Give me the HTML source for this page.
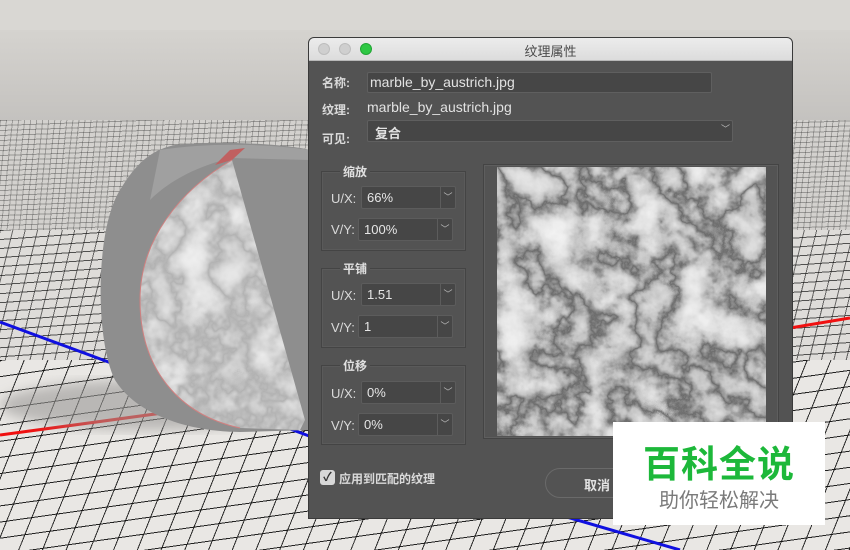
<!DOCTYPE html>
<html><head><meta charset="utf-8">
<style>
*{margin:0;padding:0;box-sizing:border-box}
body{width:850px;height:550px;overflow:hidden;position:relative;background:#e8e6e3;font-family:"Liberation Sans","Noto Sans CJK SC",sans-serif}
.band{position:absolute;left:0;width:850px}
.dlg{position:absolute;left:308px;top:37px;width:485px;height:482px;background:#535353;border-radius:6px 6px 0 0;overflow:hidden;border:1px solid #3a3a3a}
.tb{position:absolute;left:0;top:0;width:100%;height:23px;background:linear-gradient(#ececec,#dcdcdc);border-bottom:1px solid #b8b8b8}
.tl{position:absolute;top:5px;width:12px;height:12px;border-radius:50%;background:#cfcfcf;border:1px solid #bdbdbd}
.t{position:absolute;color:#e2e2e2;font-size:13px;white-space:nowrap}
.lab{position:absolute;color:#dadada;font-size:12px;white-space:nowrap;font-weight:bold}
.inp{position:absolute;background:#464646;border:1px solid #5f5f5f;border-radius:2px}
.grp{position:absolute;border:1px solid #444;box-shadow:inset 0 0 0 1px #5a5a5a;left:12px;width:145px;height:80px}
.gl{position:absolute;left:18px;top:-9px;background:#535353;padding:0 3px;color:#e0e0e0;font-size:12px;font-weight:bold}
.fld{position:absolute;height:23px;background:#464646;border:1px solid #5c5c5c;border-radius:2px;color:#e6e6e6;font-size:13px;line-height:21px;padding-left:5px}
.fld b{position:absolute;right:0;top:0;width:15px;height:21px;border-left:1px solid #5c5c5c;font-weight:normal;font-size:9px;color:#bbb;text-align:center;line-height:21px}
</style></head><body>
<div class="band" style="top:0;height:30px;background:#d9d7d3"></div>
<div class="band" style="top:30px;height:90px;background:linear-gradient(#d5d3cf,#c4c2bf)"></div>
<div class="band" style="top:120px;height:110px;background:
repeating-linear-gradient(178deg,rgba(40,40,40,.35) 0 1px,transparent 1px 5px),
repeating-linear-gradient(96deg,rgba(40,40,40,.3) 0 1px,transparent 1px 6px),#d3d1ce"></div>
<div class="band" style="top:230px;height:130px;background:
repeating-linear-gradient(176deg,rgba(20,20,20,.7) 0 1px,transparent 1px 9px),
repeating-linear-gradient(104deg,rgba(20,20,20,.6) 0 1px,transparent 1px 12px),#dedcd9"></div>
<div class="band" style="top:360px;height:190px;background:
repeating-linear-gradient(172deg,rgba(10,10,10,.9) 0 1px,transparent 1px 16px),
repeating-linear-gradient(112deg,rgba(10,10,10,.85) 0 1px,transparent 1px 22px),#e9e7e4"></div>
<svg style="position:absolute;left:0;top:0" width="850" height="550">
<defs>
<filter id="m" x="0" y="0" width="100%" height="100%">
<feTurbulence type="fractalNoise" baseFrequency="0.022" numOctaves="5" seed="3"/>
<feColorMatrix type="matrix" values="0.33 0.33 0.33 0 0 0.33 0.33 0.33 0 0 0.33 0.33 0.33 0 0 0 0 0 0 1"/>
<feComponentTransfer><feFuncR type="table" tableValues="1 .95 .9 .85 .8 .72 .55 .15 .55 .75 .85 .9 .95 1 1 1"/><feFuncG type="table" tableValues="1 .95 .9 .85 .8 .72 .55 .15 .55 .75 .85 .9 .95 1 1 1"/><feFuncB type="table" tableValues="1 .95 .9 .85 .8 .72 .55 .15 .55 .75 .85 .9 .95 1 1 1"/></feComponentTransfer>
</filter>
<filter id="ml" x="0" y="0" width="100%" height="100%">
<feTurbulence type="fractalNoise" baseFrequency="0.028" numOctaves="4" seed="7"/>
<feColorMatrix type="matrix" values="0.33 0.33 0.33 0 0 0.33 0.33 0.33 0 0 0.33 0.33 0.33 0 0 0 0 0 0 1"/>
<feComponentTransfer><feFuncR type="table" tableValues=".9 .88 .85 .82 .78 .72 .62 .45 .62 .75 .82 .86 .88 .9 .9 .9"/><feFuncG type="table" tableValues=".9 .88 .85 .82 .78 .72 .62 .45 .62 .75 .82 .86 .88 .9 .9 .9"/><feFuncB type="table" tableValues=".9 .88 .85 .82 .78 .72 .62 .45 .62 .75 .82 .86 .88 .9 .9 .9"/></feComponentTransfer>
</filter>
<filter id="b"><feGaussianBlur stdDeviation="6"/></filter>
<clipPath id="mc"><path d="M232,160 C180,190 140,240 140,300 C140,370 180,415 240,428 L300,430 L305,420 L232,160Z"/></clipPath>
</defs>
<path d="M0,322 L320,440" stroke="#1010e0" stroke-width="3"/>
<path d="M560,515 L680,550" stroke="#1010e0" stroke-width="3"/>
<path d="M0,435 L170,412" stroke="#f01010" stroke-width="3"/>
<path d="M790,328 L850,318" stroke="#f01010" stroke-width="3"/>
<ellipse cx="150" cy="405" rx="150" ry="25" fill="#9a9896" opacity=".6" filter="url(#b)"/>
<path d="M175,145 C230,140 290,145 310,150 L310,430 L240,432 C200,432 140,420 115,380 C95,340 95,230 120,190 C135,165 150,150 175,145Z" fill="#8e8e8e"/>
<path d="M160,150 C210,142 270,144 310,150 L310,160 L232,158 C200,165 170,180 150,200 Z" fill="#a0a0a0"/>
<path d="M232,160 L215,165 L230,150 L245,148Z" fill="#c06060"/>
<rect x="130" y="150" width="180" height="290" filter="url(#ml)" clip-path="url(#mc)"/>
<path d="M232,160 C180,190 140,240 140,300 C140,370 180,415 240,428" fill="none" stroke="#d08080" stroke-width="1"/>
</svg>
<div class="dlg">
<div class="tb">
<div class="tl" style="left:9px"></div><div class="tl" style="left:30px"></div>
<div class="tl" style="left:51px;background:#2ec844;border-color:#22a535"></div>
<div style="position:absolute;left:0;width:100%;top:3px;text-align:center;font-size:13px;color:#4a4a4a">纹理属性</div>
</div>
<div class="lab" style="left:13px;top:36px">名称:</div>
<div class="inp" style="left:58px;top:34px;width:345px;height:21px"></div>
<div class="t" style="left:61px;top:36px;font-size:14px">marble_by_austrich.jpg</div>
<div class="lab" style="left:13px;top:63px">纹理:</div>
<div class="t" style="left:58px;top:61px;font-size:14px">marble_by_austrich.jpg</div>
<div class="lab" style="left:13px;top:92px">可见:</div>
<div class="inp" style="left:58px;top:82px;width:366px;height:22px"></div>
<div class="t" style="left:66px;top:85px;font-weight:bold">复合</div>
<div class="t" style="left:412px;top:84px;font-size:9px;color:#bbb">﹀</div>

<div class="grp" style="top:133px"><div class="gl">缩放</div></div>
<div class="lab" style="left:22px;top:153px;font-size:13px;font-weight:normal">U/X:</div>
<div class="fld" style="left:52px;top:148px;width:95px">66%<b>﹀</b></div>
<div class="lab" style="left:22px;top:184px;font-size:13px;font-weight:normal">V/Y:</div>
<div class="fld" style="left:49px;top:180px;width:95px">100%<b>﹀</b></div>

<div class="grp" style="top:230px"><div class="gl">平铺</div></div>
<div class="lab" style="left:22px;top:250px;font-size:13px;font-weight:normal">U/X:</div>
<div class="fld" style="left:52px;top:245px;width:95px">1.51<b>﹀</b></div>
<div class="lab" style="left:22px;top:282px;font-size:13px;font-weight:normal">V/Y:</div>
<div class="fld" style="left:49px;top:277px;width:95px">1<b>﹀</b></div>

<div class="grp" style="top:327px"><div class="gl">位移</div></div>
<div class="lab" style="left:22px;top:348px;font-size:13px;font-weight:normal">U/X:</div>
<div class="fld" style="left:52px;top:343px;width:95px">0%<b>﹀</b></div>
<div class="lab" style="left:22px;top:380px;font-size:13px;font-weight:normal">V/Y:</div>
<div class="fld" style="left:49px;top:375px;width:95px">0%<b>﹀</b></div>

<div style="position:absolute;left:174px;top:126px;width:296px;height:275px;border:1px solid #444;box-shadow:inset 0 0 0 1px #5e5e5e"></div>
<svg style="position:absolute;left:188px;top:129px" width="269" height="269"><rect width="269" height="269" filter="url(#m)"/></svg>

<div style="position:absolute;left:11px;top:432px;width:15px;height:15px;background:#d8d8d8;border-radius:3px;color:#333;font-size:12px;line-height:15px;text-align:center;font-weight:bold">✓</div>
<div class="lab" style="left:30px;top:432px;font-size:12px">应用到匹配的纹理</div>
<div style="position:absolute;left:236px;top:430px;width:120px;height:30px;border:1px solid #6a6a6a;border-radius:15px"></div>
<div class="t" style="left:275px;top:437px;font-weight:bold">取消</div>
</div>
<div style="position:absolute;left:613px;top:422px;width:212px;height:103px;background:#fff"></div>
<div style="position:absolute;left:613px;top:438px;width:212px;text-align:center;font-size:37px;font-weight:bold;color:#1db83a;letter-spacing:1px;line-height:46px;font-family:'Noto Sans CJK SC',sans-serif">百科全说</div>
<div style="position:absolute;left:613px;top:485px;width:212px;text-align:center;font-size:20px;color:#7a7a7a;line-height:28px;font-family:'Noto Sans CJK SC',sans-serif">助你轻松解决</div>
</body></html>
